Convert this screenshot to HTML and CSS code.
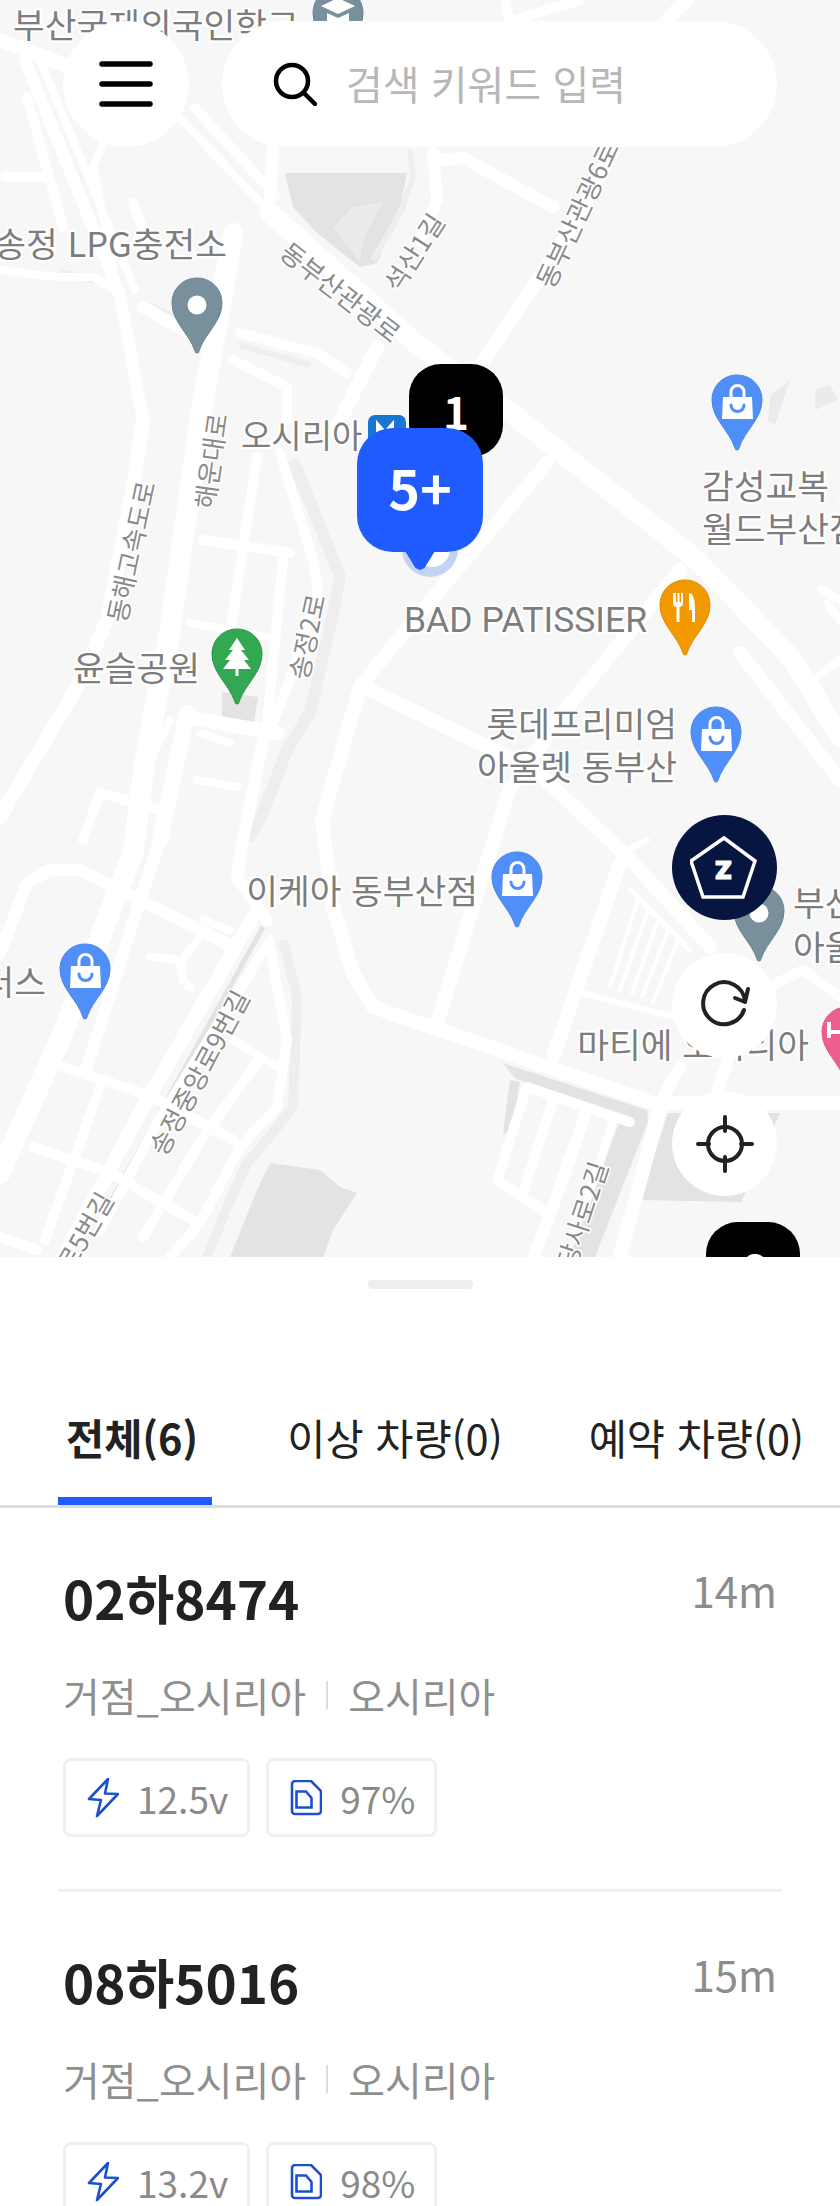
FILE: index.html
```html
<!DOCTYPE html>
<html lang="ko">
<head>
    <meta charset="utf-8">
    <title>차량 지도</title>
    <link rel="stylesheet" href="styles.css">
</head>
<body>
    <div class="map">
        <svg class="map-art" width="840" height="1257" viewBox="0 0 840 1257">
            <defs>
                <path id="pin" d="M26 1C12 1 1 12 1 26c0 19 17 30 23 48a2 2 0 0 0 4 0c6-18 23-29 23-48C51 12 40 1 26 1z"/>
                <g id="bag">
                    <use href="#pin" class="pin-blue"/>
                    <path d="M12 23h29l1 22H11z" fill="#fff"/>
                    <path d="M20 24v-6a6.5 6.5 0 0 1 13 0v6" fill="none" stroke="#fff" stroke-width="3"/>
                    <path d="M20 31a6.500 6.500 0 0 0 13 0" fill="none" stroke="#4f8ff7" stroke-width="3" stroke-linecap="round"/>
                </g>
            </defs>

            <!-- buildings -->
            <g class="block">
                <path d="M285 173H407L400 207 377 263 360 267 317 233 293 207z"/>
                <path d="M270 1163L320 1170 340 1187 357 1193 333 1230 323 1257H230L257 1190z"/>
                <path d="M668 1113H780L741 1202 640 1200z"/>
                <path d="M503 1063L647 1110 648 1122 595 1257H570L620 1120 515 1078z"/>
                <path d="M510 1080L503 1133H512L520 1082z"/>
                <path d="M222 692L258 697 254 722 222 717z"/>
            </g>
            <path class="block-light" d="M333 227L353 207 383 202 363 240 360 262z"/>
            <path class="block-light" d="M770 395L790 380 775 425 768 420zM815 390L830 385 838 400 815 410z"/>

            <!-- grey verges -->
            <g class="verge">
                <path stroke-width="12" d="M293 460L340 577 333 613 310 713 287 750 260 820 247 840"/>
                <path stroke-width="10" d="M283 940L297 997 293 1107 267 1140 247 1163 227 1207 207 1257"/>
                <path stroke-width="6" d="M410 150L413 177 400 213 373 260"/>
                <path stroke-width="6" d="M60 272L100 282M150 305L200 330M240 345L310 365"/>
            </g>
            <path class="verge-dark" stroke-width="5" d="M263 927L110 1203"/>

            <!-- roads -->
            <g class="road">
                <path stroke-width="20" d="M270 213L420 347 520 420 697 560 793 660 840 737"/>
                <path stroke-width="8" d="M180 118L270 213"/>
                <path stroke-width="10" d="M195 108L275 195"/>
                <path stroke-width="14" d="M0 40L65 65"/>
                <path stroke-width="12" d="M25 60L120 295 143 420"/>
                <path stroke-width="8" d="M40 60L135 290"/>
                <path stroke-width="14" d="M143 420L133 487 107 620 77 687 0 817"/>
                <path stroke-width="21" d="M233 233L200 420 170 630 145 760 133 853 60 1040 0 1173"/>
                <path stroke-width="10" d="M257 457L230 633"/>
                <path stroke-width="10" d="M203 540L290 553"/>
                <path stroke-width="8" d="M190 623L267 637"/>
                <path stroke-width="10" d="M280 453L313 560 318 590 290 680 270 730"/>
                <path stroke-width="10" d="M283 560L267 723"/>
                <path stroke-width="14" d="M187 717L277 733"/>
                <path stroke-width="8" d="M200 733L230 743"/>
                <path stroke-width="8" d="M197 780L237 787"/>
                <path stroke-width="16" d="M187 713L160 840"/>
                <path stroke-width="12" d="M160 840L140 900 87 1067"/>
                <path stroke-width="12" d="M263 740L243 840 237 877 267 920"/>
                <path stroke-width="14" d="M547 463L400 637 360 687 322 820 333 907 353 973 373 1007 653 1103"/>
                <path stroke-width="14" d="M370 690L535 770 627 856 710 947"/>
                <path stroke-width="14" d="M680 570L563 713 509 791 437 1023"/>
                <path stroke-width="14" d="M620 863L553 1057"/>
                <path stroke-width="14" d="M740 653L840 780"/>
                <path stroke-width="7" d="M750 660L756 680"/>
                <path stroke-width="14" d="M663 1103H840"/>
                <path stroke-width="14" d="M660 1107L620 1257"/>
                <path stroke-width="12" d="M730 1053L717 1093"/>
                <path stroke-width="12" d="M680 1067L663 1097"/>
                <path stroke-width="6" d="M583 993L673 1017"/>
                <path stroke-width="4" d="M637 903L610 987M647 913L620 990M657 923L632 993M667 933L642 997M677 943L653 1002"/>
                <path stroke-width="5" d="M630 890L690 950"/>
                <path stroke-width="10" d="M630 1122L527 1087 497 1180 547 1213"/>
                <path stroke-width="10" d="M553 1100L523 1193"/>
                <path stroke-width="12" d="M587 1110L547 1223 533 1257"/>
                <path stroke-width="8" d="M613 1120L587 1200"/>
                <path stroke-width="12" d="M0 953L27 883 50 870 80 870 160 910 233 947"/>
                <path stroke-width="10" d="M63 1067L153 1097 233 1140"/>
                <path stroke-width="10" d="M33 1147L110 1173 193 1220"/>
                <path stroke-width="10" d="M0 1237L37 1250"/>
                <path stroke-width="10" d="M100 1087L45 1240"/>
                <path stroke-width="14" d="M253 917L143 1107 63 1257"/>
                <path stroke-width="10" d="M270 940L157 1123 100 1230"/>
                <path stroke-width="10" d="M270 947L287 1040 277 1107 240 1147 200 1223 170 1257"/>
                <path stroke-width="10" d="M257 1063L203 1137 143 1237"/>
                <path stroke-width="8" d="M200 937L180 963 183 980 190 987"/>
                <path stroke-width="8" d="M150 957L180 960"/>
                <path stroke-width="8" d="M203 920L230 930"/>
                <path stroke-width="8" d="M233 1040L277 1067"/>
                <path stroke-width="10" d="M5 177H45"/>
                <path stroke-width="10" d="M27 97L63 227"/>
                <path stroke-width="10" d="M133 203L147 240"/>
                <path stroke-width="8" d="M103 143L93 167 100 200 113 267"/>
                <path stroke-width="8" d="M0 270L57 277 93 277 120 293"/>
                <path stroke-width="12" d="M143 307L213 347"/>
                <path stroke-width="10" d="M240 333L317 353 347 373"/>
                <path stroke-width="10" d="M233 360L287 387V420"/>
                <path stroke-width="14" d="M377 347L335 430"/>
                <path stroke-width="12" d="M273 147L270 200"/>
                <path stroke-width="12" d="M433 153L437 200 420 240"/>
                <path stroke-width="12" d="M433 160L463 158 553 207"/>
                <path stroke-width="14" d="M613 150L587 200 553 257 480 367"/>
                <path stroke-width="10" d="M505 0L510 20M515 20L580 0"/>
                <path stroke-width="14" d="M667 20L687 0"/>
                <path stroke-width="10" d="M100 793L83 840M100 793L160 810"/>
                <path stroke-width="8" d="M170 720L133 793"/>
                <path stroke-width="8" d="M803 687L840 660"/>
                <path stroke-width="8" d="M822 590L840 600M827 603L840 620"/>
                <path stroke-width="10" d="M773 985L803 970 840 997"/>
                <path stroke-width="6" d="M623 853L647 840"/>
            </g>

            <!-- place names -->
            <g class="place">
                <text x="13" y="38">부산국제외국인학교</text>
                <text x="227" y="257" text-anchor="end">송정 LPG충전소</text>
                <text x="241" y="448" class="place-small">오시리아</text>
                <text x="702" y="499">감성교복 스</text>
                <text x="702" y="542">월드부산점</text>
                <text x="404" y="632" class="place-latin">BAD PATISSIER</text>
                <text x="73" y="681">윤슬공원</text>
                <text x="677" y="737" text-anchor="end">롯데프리미엄</text>
                <text x="677" y="780" text-anchor="end">아울렛 동부산</text>
                <text x="478" y="904" text-anchor="end">이케아 동부산점</text>
                <text x="46" y="995" text-anchor="end">터스</text>
                <text x="793" y="916">부산</text>
                <text x="793" y="960">아울렛</text>
                <text x="809" y="1058" text-anchor="end">마티에 오시리아</text>
            </g>
            <g class="street" text-anchor="middle">
                <text transform="translate(340 293) rotate(38)" y="9">동부산관광로</text>
                <text transform="translate(415 253) rotate(-57)" y="9">석산1길</text>
                <text transform="translate(578 215) rotate(-65)" y="9">동부산관광6로</text>
                <text transform="translate(212 461) rotate(-82)" y="9">해운대로</text>
                <text transform="translate(132 552) rotate(-78)" y="9">동해고속도로</text>
                <text transform="translate(308 637) rotate(-78)" y="9">송정2로</text>
                <text transform="translate(200 1073) rotate(-62)" y="9">송정중앙로9번길</text>
                <text transform="translate(107 1195) rotate(-60)" y="9" text-anchor="end">송정중앙로5번길</text>
                <text transform="translate(583 1215) rotate(-72)" y="9">당사로2길</text>
            </g>

            <!-- pins -->
            <g transform="translate(312 -13)">
                <use href="#pin" class="pin-grey"/>
                <path d="M26 11l17 8-17 8-17-8z" fill="#fff"/>
                <path d="M15 26v8l11 5 11-5v-8l-11 5z" fill="#fff"/>
            </g>
            <g transform="translate(171 277)">
                <use href="#pin" class="pin-grey"/>
                <circle cx="26" cy="28" r="9.500" fill="#fff"/>
            </g>
            <g transform="translate(733 885)">
                <use href="#pin" class="pin-grey"/>
                <circle cx="26" cy="28" r="9.500" fill="#fff"/>
            </g>
            <use href="#bag" x="711" y="374"/>
            <use href="#bag" x="690" y="706"/>
            <use href="#bag" x="491" y="851"/>
            <use href="#bag" x="59" y="943"/>
            <g transform="translate(659 579)">
                <use href="#pin" class="pin-orange"/>
                <path d="M14 14v10a4 4 0 0 0 3.500 4v15h3V28a4 4 0 0 0 3.500-4V14h-2v9h-1.500v-9h-2v9H17v-9z" fill="#fff"/>
                <path d="M30 14c5 0 6 9 6 16v13h-3V31h-3z" fill="#fff"/>
            </g>
            <g transform="translate(211 628)">
                <use href="#pin" class="pin-green"/>
                <path d="M26 10l8 12h-4l8 10h-5l7 9H12l7-9h-5l8-10h-4z" fill="#fff"/>
                <path d="M24.500 40h3v8h-3z" fill="#fff"/>
            </g>
            <g transform="translate(821 1006)">
                <use href="#pin" class="pin-pink"/>
                <path d="M6 16h4v8h12v-8h4v24h-4v-12H10v4H6z" fill="#fff"/>
            </g>
            <rect x="368" y="415" width="38" height="38" rx="7" fill="#1976d2"/>
            <path d="M378 437v-12l7 8 7-8v12" fill="none" stroke="#fff" stroke-width="4"/>

            <!-- selected place ring -->
            <circle cx="430" cy="549" r="28" fill="#c3d2f5"/>
            <circle cx="432" cy="549" r="18" fill="#fff"/>
        </svg>

        <div class="count-mark count-mark-black count-one">1</div>
        <div class="count-mark count-mark-black count-two">6</div>
        <div class="count-mark count-mark-blue">5+</div>

        <div class="top-bar">
            <button class="round-btn menu-btn">
                <svg width="54" height="46" viewBox="0 0 54 46">
                    <path d="M3 3h48M3 23h48M3 43h48" fill="none" stroke="#000" stroke-width="5.500" stroke-linecap="round"/>
                </svg>
            </button>
            <div class="search-box">
                <svg width="44" height="44" viewBox="0 0 44 44">
                    <circle cx="19" cy="19" r="16" fill="none" stroke="#000" stroke-width="4.500"/>
                    <path d="M31 31l11 11" fill="none" stroke="#000" stroke-width="4.500" stroke-linecap="round"/>
                </svg>
                <input class="search-input" type="text" placeholder="검색 키워드 입력">
            </div>
        </div>

        <div class="side-btns">
            <button class="round-btn zone-btn">
                <svg width="70" height="66" viewBox="0 0 70 66">
                    <path d="M34 3L65 26 53 62H13L1 26z" fill="none" stroke="#fff" stroke-width="3.500"/>
                    <text x="33.500" y="44" text-anchor="middle" class="zone-letter">Z</text>
                </svg>
            </button>
            <button class="round-btn">
                <svg width="52" height="52" viewBox="0 0 52 52">
                    <path d="M45 30A21 21 0 1 1 46 21" fill="none" stroke="#222" stroke-width="4" stroke-linecap="round"/>
                    <path d="M49 9L46 22 36 18" fill="none" stroke="#222" stroke-width="4" stroke-linecap="round" stroke-linejoin="round"/>
                </svg>
            </button>
            <button class="round-btn">
                <svg width="58" height="58" viewBox="0 0 58 58">
                    <circle cx="29" cy="29" r="17" fill="none" stroke="#222" stroke-width="4"/>
                    <path d="M29 2v14M29 42v14M2 29h11M45 29h11" fill="none" stroke="#222" stroke-width="4" stroke-linecap="round"/>
                </svg>
            </button>
        </div>
    </div>

    <div class="sheet">
        <div class="handle"></div>
        <div class="tabs">
            <div class="tab tab-active">전체(6)</div>
            <div class="tab">이상 차량(0)</div>
            <div class="tab">예약 차량(0)</div>
        </div>

        <div class="car-item">
            <div class="car-top">
                <div class="car-number">02하8474</div>
                <div class="car-time">14m</div>
            </div>
            <div class="car-place"><span>거점_오시리아</span><i class="place-sep"></i><span>오시리아</span></div>
            <div class="chips">
                <div class="chip">
                    <svg width="32" height="40" viewBox="0 0 32 40"><path d="M21 1L2 21l12 1-4 16 21-22-13-.5z" fill="none" stroke="#1d4fd0" stroke-width="2.600" stroke-linejoin="round"/></svg>
                    <span>12.5v</span>
                </div>
                <div class="chip">
                    <svg width="32" height="36" viewBox="0 0 32 36"><path d="M5 1h16l10 10v20a3 3 0 0 1-3 3H5a3 3 0 0 1-3-3V4a3 3 0 0 1 3-3z" fill="none" stroke="#1d4fd0" stroke-width="2.600"/><path d="M6.500 11.500h9.500l5.500 6.500v9.500h-15z" fill="none" stroke="#1d4fd0" stroke-width="2.600"/></svg>
                    <span>97%</span>
                </div>
            </div>
        </div>

        <div class="car-item">
            <div class="car-top">
                <div class="car-number">08하5016</div>
                <div class="car-time">15m</div>
            </div>
            <div class="car-place"><span>거점_오시리아</span><i class="place-sep"></i><span>오시리아</span></div>
            <div class="chips">
                <div class="chip">
                    <svg width="32" height="40" viewBox="0 0 32 40"><path d="M21 1L2 21l12 1-4 16 21-22-13-.5z" fill="none" stroke="#1d4fd0" stroke-width="2.600" stroke-linejoin="round"/></svg>
                    <span>13.2v</span>
                </div>
                <div class="chip">
                    <svg width="32" height="36" viewBox="0 0 32 36"><path d="M5 1h16l10 10v20a3 3 0 0 1-3 3H5a3 3 0 0 1-3-3V4a3 3 0 0 1 3-3z" fill="none" stroke="#1d4fd0" stroke-width="2.600"/><path d="M6.500 11.500h9.500l5.500 6.500v9.500h-15z" fill="none" stroke="#1d4fd0" stroke-width="2.600"/></svg>
                    <span>98%</span>
                </div>
            </div>
        </div>
    </div>
</body>
</html>
```

FILE: styles.css
```css
* { margin: 0; padding: 0; box-sizing: border-box; }
html, body { height: 2206px; overflow: hidden; }
body { font-family: "Noto Sans CJK KR", "Noto Sans", sans-serif; background-color: white; color: #222; }
button { border: none; font: inherit; }

/* map */
.map { position: relative; height: 1257px; overflow: hidden; background-color: #f7f7f7; }
.map-art { position: absolute; top: 0; left: 0; display: block; }
.block { fill: #e3e3e3; }
.block-light { fill: #ebebeb; }
.verge { fill: none; stroke: #eeeeee; stroke-linejoin: round; }
.verge-dark { fill: none; stroke: #e3e3e3; }
.road { fill: none; stroke: white; stroke-linecap: round; stroke-linejoin: round; }
.place, .street {
    font-family: "Noto Sans CJK KR", sans-serif;
    fill: #7d7d7d; stroke: white; stroke-width: 4px; stroke-linejoin: round; paint-order: stroke;
}
.place { font-size: 34.5px; }
.place-small { font-size: 33px; }
.place-latin { font-family: Roboto, sans-serif; font-size: 35.5px; }
.street { font-size: 26px; fill: #8a8a8a; stroke-width: 3px; }
.pin-grey { fill: #78909c; stroke: #6d8490; }
.pin-blue { fill: #4f8ff7; stroke: #4a87ec; }
.pin-orange { fill: #f29900; stroke: #e08e00; }
.pin-green { fill: #33a852; stroke: #2a9647; }
.pin-pink { fill: #ee5f8f; stroke: #e2558a; }

/* count markers */
.count-mark { position: absolute; display: flex; justify-content: center; color: white; }
.count-mark-black {
    width: 94px; height: 93px; padding-top: 15px; background-color: black; border-radius: 32px;
    font-size: 44px; font-weight: 700; line-height: 64px;
}
.count-one { top: 364px; left: 409px; }
.count-two { top: 1222px; left: 706px; }
.count-mark-blue {
    top: 428px; left: 357px; width: 126px; height: 124px; align-items: center; padding-bottom: 8px;
    background-color: #1f5bff; border-radius: 36px; font-size: 54px; font-weight: 700;
}
.count-mark-blue::after {
    content: ""; position: absolute; top: 123px; left: 48px; width: 30px; height: 19px;
    background-color: #1f5bff; clip-path: polygon(0 0, 100% 0, 65% 90%, 50% 100%, 35% 90%);
}

/* top controls */
.top-bar { position: absolute; top: 21px; left: 63px; display: flex; gap: 33px; }
.round-btn {
    display: flex; align-items: center; justify-content: center;
    width: 105px; height: 105px; background-color: white; border-radius: 50%;
}
.menu-btn { width: 126px; height: 126px; }
.search-box {
    display: flex; align-items: center; gap: 29px;
    width: 555px; height: 126px; padding-left: 51px; background-color: white; border-radius: 63px;
}
.search-input {
    flex: 1; min-width: 0; border: none; outline: none; background: none; margin-top: -2px;
    font-family: inherit; font-size: 40px; color: #222;
}
.search-input::placeholder { color: #b7b7b7; opacity: 1; }

.side-btns { position: absolute; top: 815px; left: 672px; display: flex; flex-direction: column; gap: 33px; }
.zone-btn { background-color: #061641; }
.zone-letter { font-family: Inter, sans-serif; font-size: 25px; font-weight: 900; fill: white; stroke: white; stroke-width: 1px; }

/* bottom sheet */
.sheet { background-color: white; }
.handle { width: 105px; height: 9px; margin: 23px auto 0; background-color: #eee; border-radius: 4px; }
.tabs {
    display: flex; gap: 64px; height: 109px; margin-top: 110px; padding-left: 58px;
    border-bottom: 3px solid #ddd;
}
.tab {
    height: 106px; padding: 0 11px; line-height: 76px; font-size: 41.5px; color: #222;
    white-space: nowrap; margin-bottom: -1px;
}
.tab-active { padding: 0 14px 0 8px; font-weight: 700; border-bottom: 8px solid #1f5bff; }

.car-item { margin: 0 58px; padding: 59px 5px 52px; border-bottom: 3px solid #f0f0f0; }
.car-top { display: flex; justify-content: space-between; align-items: flex-start; }
.car-number { font-size: 53px; font-weight: 700; line-height: 60px; color: #222; }
.car-time { margin-top: -3px; font-size: 42px; line-height: 52px; color: #8c8c8c; }
.car-place { display: flex; align-items: center; margin-top: 43px; font-size: 40px; line-height: 50px; color: #8f8f8f; }
.place-sep { width: 2px; height: 28px; margin: 0 20px; background-color: #ddd; }
.chips { display: flex; gap: 16px; margin-top: 38px; }
.chip {
    display: flex; align-items: center; gap: 18px;
    height: 79px; padding: 0 19px 0 21px; border: 3px solid #f0f0f0; border-radius: 8px;
    font-size: 37px; color: #8a8a8a;
}
```
